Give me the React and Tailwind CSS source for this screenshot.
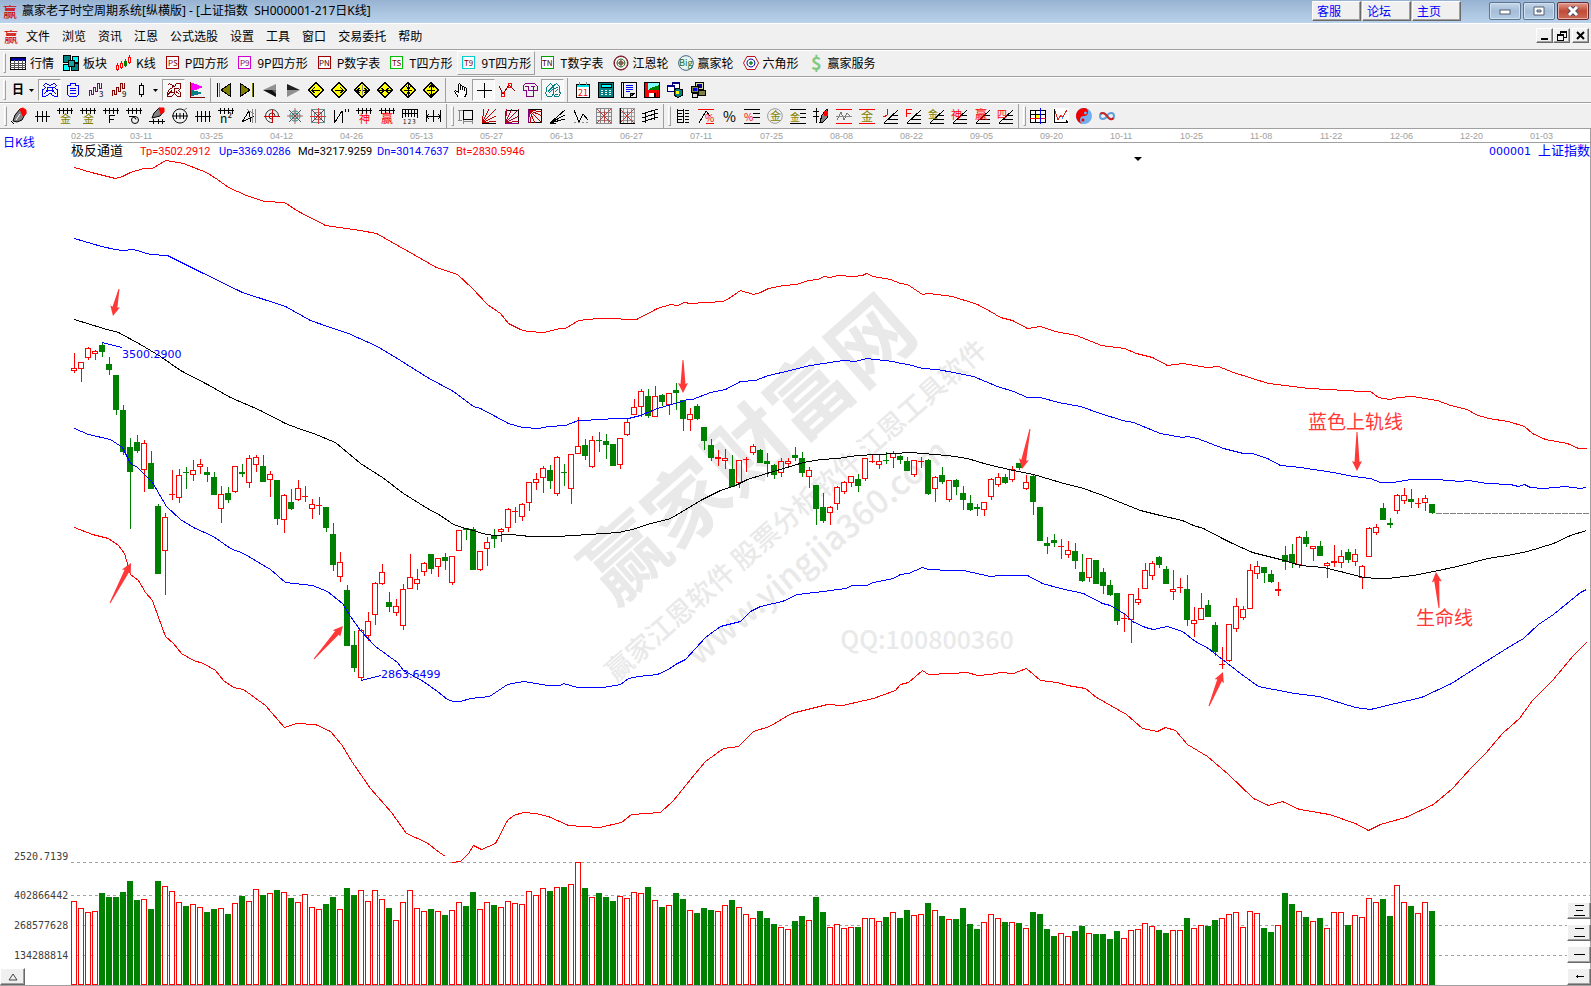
import React from 'react';

const UI_FONT = "font-['Noto_Sans_CJK_SC',sans-serif]";
const CJK = '"Noto Sans CJK SC", sans-serif';

// ---------------------------------------------------------------- icons
// every icon: p = [path, stroke, fill], t = [text, x, y, size, colour]
const fan = 'M1 15L15 1M1 15L8 1M1 15L15 8M1 15L3 1M1 15L15 13';
const comb = 'M0 2.5H16M2.5 0V6M6.5 0V6M10.5 0V6M14.5 0V6';
const slopes = 'M2 15.5H16M2 15L16 2M6 11.5H16M10 7.5H16';
const diamond = ['M8 .5L15.5 8L8 15.5L.5 8Z', '#000', '#ffff00'];

const ICONS = {
  quote: { p: [['M.5 2.5H15.5V14.5H.5Z', '#000', '#fff'], ['M1 3H15V5H1Z', '#000080', '#0000c0'], ['M0 8.5H16M0 10.5H16M0 12.5H16M4.5 5V14M8.5 5V14M12.5 5V14', '#555']] },
  blocks: { p: [['M.5 .5H7.5V7.5H.5Z', '#000', '#008080'], ['M9.5 1.5H15.5V7.5H9.5Z', '#000', '#00ffff'], ['M.5 9.5H6.5V15.5H.5Z', '#000', '#00ffff'], ['M8.5 8.5H15.5V15.5H8.5Z', '#000', '#008080'], ['M5.5 5.5H11.5V11.5H5.5Z', '#000', '#20a0a0']] },
  kline: { p: [['M1.5 8V16M5.5 6V14M13.5 0V9', '#f00'], ['M9.5 4V12', '#008000'], ['M.5 10.5H2.5V14.5H.5Z', '#f00', '#fff'], ['M4.5 8.5H6.5V12.5H4.5Z', '#f00', '#fff'], ['M8.5 6.5H10.5V10.5H8.5Z', '#008000', '#008000'], ['M12.5 2.5H14.5V7.5H12.5Z', '#f00', '#fff']] },
  ps: { p: [['M1.5 1.5H13.5V13.5H1.5Z', '#a00000', '#fff']], t: [['PS', 3, 11, 8, '#800000']] },
  p9: { p: [['M1.5 1.5H13.5V13.5H1.5Z', '#d000d0', '#fff']], t: [['P9', 3, 11, 8, '#800060']] },
  pn: { p: [['M1.5 1.5H13.5V13.5H1.5Z', '#a00000', '#fff']], t: [['PN', 2, 11, 8, '#400000']] },
  ts: { p: [['M1.5 1.5H13.5V13.5H1.5Z', '#00c000', '#fff']], t: [['TS', 3, 11, 8, '#800000']] },
  t9: { p: [['M1.5 1.5H13.5V13.5H1.5Z', '#00d0d0', '#fff']], t: [['T9', 3, 11, 8, '#800000']] },
  tn: { p: [['M1.5 1.5H13.5V13.5H1.5Z', '#00a000', '#fff']], t: [['TN', 2, 11, 8, '#400000']] },
  gann: { smooth: true, p: [['M8 1A7 7 0 1 1 7.9 1Z', '#801828', '#fff'], ['M8 1.5A6.500 6.500 0 1 1 7.9 1.5Z', '#801828'], ['M8 4A4 4 0 1 1 7.9 4Z', '#207020'], ['M8 6A2 2 0 1 1 7.9 6Z', '#b02030', '#d06060'], ['M8 4V12M4 8H12', '#507050']] },
  big: { smooth: true, p: [['M8 .7A7.3 7.3 0 1 1 7.9 .7Z', '#406080', '#e8f4f0']], t: [['Big', 1, 11, 9, '#107030']] },
  hex: { smooth: true, p: [['M4 1.5H12L15.5 8L12 14.5H4L.5 8Z', '#c01020', '#fff'], ['M8 4A4 4 0 1 1 7.9 4Z', '#0000a0'], ['M8 6.5A1.5 1.5 0 1 1 7.9 6.5Z', '#209040', '#209040']] },
  dollar: { t: [['$', 3, 15, 18, '#80c880']] },
  day: { t: [['日', 2, 12, 12, '#000']] },
  frame: { p: [['M1.5 3.5L3.5 1.5L8 3.5L12.5 1.5L14.5 3.5L12.5 5.5L15.5 8V14.5H12.5L8 11.5L3.5 14.5H.5V8L3.5 5.5ZM4.5 5.5H11.5M2 12L6 8.5H10L14 12M6 6.5L4 9M10 6.5L12 9M6.5 11.5H9.5', '#0000ff']] },
  clip: { p: [['M5.5 1.5H10.5V3.5H13.5V12.5L11.5 14.5H4.5L2.5 12.5V3.5H5.5ZM5 6.5H11M5 8.5H11M5 11.5H11', '#0000ff']] },
  wave3: { p: [['M1.5 14V8.5H3.5V12.5H5.5V5.5H7.5V9.5H9.5V1.5H11.5V6.5H13.5V1', '#800080']], t: [['3', 11, 15, 8, '#000']] },
  wave9: { p: [['M1.5 14V8.5H3.5V12.5H5.5V5.5H7.5V9.5H9.5V1.5H11.5V6.5H13.5V1', '#800000']], t: [['9', 11, 15, 8, '#000']] },
  candle: { p: [['M7.5 1V3M7.5 12V15M5.5 3.5H9.5V12.5H5.5Z', '#000']] },
  ornate: { p: [['M1.5 3.5L3.5 1.5L6.5 3.5V5.5L3.5 7.5L1.5 10.5V14.5H5.5L8.5 11.5L11.5 14.5H14.5V10.5L12.5 8.5L14.5 6.5V1.5H10.5L8.5 4.5L6.5 3.5M4.5 10.5H8.5V6.5H12.5M2 12.5L6 8.5M10 9.5L13.5 12.5', '#800000']] },
  flags: { p: [['M1.5 0V15.5H16', '#800000'], ['M2 1L13 5L2 9Z', '#ff00ff', '#ff00ff'], ['M2 8L12 11L2 14Z', '#008080', '#008080']] },
  first: { p: [['M1.5 1V15', '#000', '#808000'], ['M3 1V15', '#808000'], ['M14.5 1.5V14.5L5 8Z', '#000', '#808000']] },
  last: { p: [['M14.5 1V15', '#000'], ['M13 1V15', '#808000'], ['M1.5 1.5V14.5L11 8Z', '#000', '#808000']] },
  prev: { smooth: true, p: [['M14 2V8H1Z', 'none', '#909090'], ['M1 8H14V15Z', 'none', '#101010'], ['M14 8L10 8L14 12Z', 'none', '#606060']] },
  next: { smooth: true, p: [['M2 2V8H15Z', 'none', '#202020'], ['M15 8H2V15Z', 'none', '#909090']] },
  dLeft: { p: [diamond, ['M4 8.5H12M6.5 5.5L4 8.5L6.5 11', '#000']] },
  dRight: { p: [diamond, ['M4 8.5H12M9.5 5.5L12 8.5L9.5 11', '#000']] },
  dOut: { p: [diamond, ['M3 8.5H7M9 8.5H13M5.5 6L3 8.5L5.5 11M10.5 6L13 8.5L10.5 11', '#000'], ['M8 3V13', '#888']] },
  dIn: { p: [diamond, ['M2 8.5H14M4.5 6L7 8.5L4.5 11M11.5 6L9 8.5L11.5 11', '#000']] },
  dVin: { p: [diamond, ['M4 8.5H12M8.5 2V14M6 4L8.5 7L11 4M6 13L8.5 10L11 13', '#000']] },
  dVout: { p: [diamond, ['M4 8.5H12M8.5 2V14M6 5.5L8.5 3L11 5.5M6 11L8.5 14L11 11', '#000']] },
  hand: { p: [['M5.5 15.5L1.5 9.5L2.5 8.5L5.5 10.5V2.5L6.5 1.5L7.5 2.5V8V4.5L8.5 3.5L9.5 4.5V8V5.5L10.5 4.5L11.5 5.5V9V6.5L12.5 5.5L13.5 7V11.5L11.5 15.5', '#000', '#fff']] },
  cross: { p: [['M8.5 1V16M1 8.5H16', '#000']] },
  zigzag: { p: [['M0 4L4 12L10 3L16 9', '#800000'], ['M2.5 10.5H5.5V14.5H2.5ZM9.5 1.5H12.5V5.5H9.5Z', '#f00']] },
  tree: { p: [['M4.5 8.5H1.5V3.5L3.5 1.5H12.5L15.5 4.5V8.5H11.5M6.5 4V8H11V4M3 4.5H6M9 4.5H13M4.5 8.5V14.5H11.5V8.5', '#800080']] },
  cloud: { p: [['M5.5 1.5L8.5 4L11.5 1.5L14.5 4.5V9.5L15.5 11.5L13.5 14.5H9.5L8.5 12L6.5 14.5H2.5L.5 11.5L1.5 9V5.5ZM3 9.5L8 4.5M4 11L8 7M9 7L13 5M10 9.5L13 7.5M8.5 4V12M10 12.5H13', '#008080']] },
  calendar: { p: [['M1.5 2.5H14.5V15.5H1.5Z', '#000', '#fff'], ['M2 3.5H14M2 4.5H14', '#00e0e0'], ['M4.5 0V3M11.5 0V3', '#888']], t: [['21', 3, 14, 9, '#f00']] },
  calc: { p: [['M.5 .5H15.5V15.5H.5Z', '#000', '#008080'], ['M3 2.5H13V5.5H3Z', '#000', '#00ffff'], ['M3 8.5H5M7 8.5H9M11 8.5H13M3 10.5H5M7 10.5H9M11 10.5H13M3 12.5H5M7 12.5H9M11 12.5H13', '#fff']] },
  note: { p: [['M.5 .5H15.5V15.5H.5Z', '#000', '#f0f0f0'], ['M2.5 1V15', '#000'], ['M5 3.5H12M5 5.5H12M5 7.5H12M5 9.5H9', '#0000ff'], ['M9 15V11H14Z', '#000', '#808080']] },
  disk: { p: [['M.5 .5H15.5V15.5H.5Z', '#000', '#f00'], ['M4 1H15V8H4Z', 'none', '#80ffff'], ['M4 8L9 5L15 3V8Z', 'none', '#008000'], ['M5 11H12V15H5Z', 'none', '#fff'], ['M10 11H12V15H10Z', 'none', '#000'], ['M13.5 9V15', '#0000a0']] },
  netpc: { p: [['M5.5 .5H12.5V6.5H5.5Z', '#000080', '#fff'], ['M.5 3.5H7.5V9.5H.5Z', '#000080', '#fff'], ['M5 1.5H13M0 4.5H8', '#000080'], ['M11 6L15.5 8V13L11 15.5L7 13V8Z', '#000', '#008080'], ['M9 9H12V12H9Z', 'none', '#ffff00']] },
  pcs: { p: [['M5.5 .5H13.5V7.5H5.5Z', '#000', '#d8d8a0'], ['M7 2H12V6H7Z', 'none', '#0000a0'], ['M1.5 4.5H8.5V10.5H1.5Z', '#000', '#808040'], ['M3 6H7V9H3Z', 'none', '#0000ff'], ['M8.5 8.5H15.5V13.5H8.5Z', '#000', '#808040'], ['M2.500 11.5H7.5V15.5H2.500Z', '#000', '#ddd']] },
  pen: { smooth: true, p: [['M2 13L4 7L9 1L15 4L11 12L6 14Z', '#000', '#808080'], ['M9 1L12 0L15 2V6L12 8Z', '#f00', '#f00'], ['M5 12L9 6', '#fff'], ['M0 13L3 16', '#000']] },
  ticks: { p: [['M1 8.5H16M3.5 3V14M8.5 3V14M12.5 3V14', '#000']] },
  gold1: { p: [[comb, '#000']], t: [['金', 3, 15, 11, '#808000']] },
  gold2: { p: [[comb, '#000'], ['M3 15.5H13', '#808000']], t: [['金', 3, 15, 11, '#808000']] },
  fib: { p: [[comb, '#000'], ['M6.5 15V7.5H12M6.5 11.5H11', '#000']] },
  spiral: { smooth: true, p: [['M0 2.5H16M2.5 0V6M6.5 0V6M10.5 0V6M14.5 0V6', '#000'], ['M3 8.5H9A3.500 3.500 0 1 1 5.500 12A2 2 0 0 1 10 11.500', '#000']] },
  penline: { smooth: true, p: [['M3 10L5 5L10 0L15 3L11 8Z', '#000', '#808080'], ['M10 0H15V4L12 6Z', '#f00', '#f00'], ['M0 13.5H16M4.5 11V16M9.5 11V16M13.5 11V16', '#000']] },
  ringScale: { smooth: true, p: [['M8 1A7 7 0 1 1 7.9 1Z', '#000'], ['M0 8H16M4.5 5V11M8 5V11M11.5 5V11', '#000'], ['M11 3L15 0', '#777']] },
  ticks4: { p: [['M0 8.5H16M2.5 3V14M6.5 3V14M10.5 3V14M14.5 3V14', '#000']] },
  nsq: { p: [[comb, '#000']], t: [['n²', 2, 15, 12, '#000']] },
  angle: { p: [['M1 14L8 3L10 14M1 14L13 8', '#000'], ['M6 1.5L13 6M11.5 1V15M14.5 1V15', '#888']] },
  swirl: { smooth: true, p: [['M9 14.500A6.500 6.500 0 1 1 14.500 8', '#333'], ['M11 8A3 3 0 1 0 8 11', '#333'], ['M0 8.5H16M8.5 2V15', '#d00000']] },
  star: { smooth: true, p: [['M8 3A5 5 0 1 1 7.9 3Z M8 5A3 3 0 1 1 7.9 5Z', '#008080'], ['M8 0V16M0 8H16', '#c06060'], ['M2 2L14 14M14 2L2 14', '#555']] },
  starBox: { p: [['M1.5 1.5H14.5V14.5H1.5ZM4.5 4.5H11.5V11.5H4.5Z', '#609090'], ['M8.5 0V16M0 8.5H16', '#e03030'], ['M2 2L14 14M14 2L2 14', '#883333']] },
  nmark: { p: [['M1.5 2V15M2 14L9 3M9.5 3V15M12.5 1V4M15.5 1V4', '#000']] },
  shen: { p: [[comb, '#000']], t: [['神', 3, 15, 11, '#f00']] },
  ying: { p: [[comb, '#000']], t: [['赢', 2, 15, 12, '#f00']] },
  ruler: { p: [['M.5 9.5V1.5H15.5V9.5M0 5.5H16M3.5 2V9M6.5 2V9M9.5 2V9M12.5 2V9', '#000']], t: [['1 2 3', 1, 16, 6, '#000']] },
  spread: { p: [['M1.5 2V14M8.5 2V14M15.5 2V14M2 8.5H15M4 6L2 8.5L4 11M13 6L15 8.5L13 11', '#000']] },
  crop: { p: [['M5.5 2.5H14.5V11.5H5.5Z', '#000'], ['M0 2.5H5M1.5 3V12M0 12.5H4M5.5 13.5H15M5.5 12V16M14.5 12V16', '#888']] },
  fanRed: { p: [[fan, '#c00000'], ['M1 15.5H15', '#000']] },
  fanBox: { p: [['M1.5 2.5H14.5V15', '#000'], [fan, '#b00020'], ['M1 15.5H15M1.5 3V15', '#800080']] },
  fanBoxDown: { p: [['M1.5 1.5H14.5V14.5H1.5Z', '#000'], ['M2 2L15 15M2 2L8 15M2 2L15 8M2 2L15 4M2 2L4 15', '#c00000'], ['M1.5 1V15', '#800080']] },
  fanBlack: { p: [['M0 15L15 2M0 15L15 7M0 15L15 11M0 15H6', '#000']] },
  vee: { p: [['M1 2L6 14L10 6L15 12', '#000'], ['M1 14.5H3M5 14.5H7M9 14.5H11M13 14.5H15', '#888']] },
  gridGrey: { p: [['M.5 .5H15.5V15.5H.5ZM0 4.5H16M0 8.5H16M0 12.5H16M4.5 0V16M8.5 0V16M12.5 0V16', '#888'], ['M1 1L15 15M15 1L1 15M8.5 3V14', '#c04040']] },
  gridAxis: { p: [['M.5 .5H15.5V15.5H.5ZM0 4.5H16M0 8.5H16M0 12.5H16M4.5 0V16M8.5 0V16M12.5 0V16', '#999'], ['M1 1L15 15M15 1L1 15M8.5 3V14', '#c04040'], ['M1.5 0V15.5H16', '#000']] },
  parallels: { p: [['M0 6L16 1M0 10L16 5M0 14L16 9M3.5 5V15M12.5 2V12', '#000']] },
  ladder: { p: [['M2.5 1V15M8.5 1V15M2 2.5H9M2 5.5H7M2 8.5H9M2 11.5H7M2 14.5H9M10 2.5H14M10 5.5H14M10 8.5H14M10 11.5H14M10 14.5H14', '#000']] },
  pctSlope: { p: [['M0 1.5H16M8 15.5H16', '#f00'], ['M1 15L8 3L12 8', '#000']], t: [['%', 7, 14, 10, '#f00']] },
  pct: { t: [['%', 2, 14, 14, '#000']] },
  pctLines: { p: [['M0 1.5H16M9 5.5H16M9 9.5H16M0 15.5H16', '#000']], t: [['%', 0, 13, 10, '#f00']] },
  goldRing: { smooth: true, p: [['M8 .7A7.3 7.3 0 1 1 7.9 .7Z', '#999']], t: [['金', 3, 12, 11, '#808000']] },
  goldLines: { p: [['M0 1.5H16M10 5.5H16M10 9.5H16M0 15.5H16', '#000']], t: [['金', 0, 13, 10, '#808000']] },
  penBars: { p: [['M0 3.5H6M0 8.5H6M3.5 0V15', '#000'], ['M7 14L9 7L14 1L15 9L10 14Z', '#000', '#808080'], ['M11 3H15V8H11Z', 'none', '#f00']] },
  mid: { p: [['M0 1.5H16M0 15.5H16', '#f00'], ['M1 12L5 4L8 12L11 5L15 9', '#777'], ['M0 8.5H16', '#888']] },
  goldMid: { p: [['M0 1.5H16M0 15.5H16', '#f00']], t: [['金', 2, 13, 12, '#808000']] },
  jSlope: { p: [[slopes, '#000'], ['M5.5 1V6.5L3 8.5H1', '#f00']] },
  fSlope: { p: [[slopes, '#000'], ['M1.5 9V1.5H7M1.5 5.5H6', '#f00']] },
  goldSlope: { p: [[slopes, '#000']], t: [['金', 0, 10, 10, '#808000']] },
  shenSlope: { p: [[slopes, '#000']], t: [['神', 0, 11, 11, '#f00']] },
  yingSlope: { p: [[slopes, '#000']], t: [['赢', 1, 11, 12, '#f00']] },
  siSlope: { p: [[slopes, '#000']], t: [['四', 0, 10, 10, '#f00']] },
  table: { p: [['M.5 2.5H15.5V14.5H.5ZM5.5 2V15', '#000', '#fff'], ['M6 7H10V11H6Z', 'none', '#ffff00'], ['M0 6.5H16', '#000'], ['M0 10.5H16', '#f00'], ['M10.5 0V16', '#0000ff']] },
  axis: { p: [['M0 0H16V16H0Z', 'none', '#fff'], ['M1.5 1V14.5H15M13 12.5L15 14.5', '#000'], ['M2 3L5 12L8 7M9 10L14 2', '#e02020'], ['M8 7L10 11', '#4080ff']] },
  taiji: { smooth: true, p: [['M8 0A8 8 0 1 1 7.9 0Z', 'none', '#70b0f0'], ['M8 0A8 8 0 0 0 8 16A4 4 0 0 1 8 8A4 4 0 0 0 8 0Z', 'none', '#f00000'], ['M9.500 3.500A1.500 1.500 0 1 1 9.400 3.500Z', 'none', '#70b0f0'], ['M7 10.500A1.500 1.500 0 1 1 6.900 10.500Z', 'none', '#f00000']] },
  infinity: { smooth: true, wide: 2, p: [['M8 8C6 4 1 4 1 8S6 12 8 8', '#60a0d8'], ['M8 8C10 4 15 4 15 8S10 12 8 8', '#60a0d8'], ['M1.500 6C4 3.500 6.500 6 8 8S12 13 14.500 10', '#d02020']] },
};

function Icon({ name }) {
  const { p = [], t = [], smooth, wide } = ICONS[name];
  return (
    <svg viewBox="0 0 16 16" className="h-4 w-4 shrink-0 overflow-visible" aria-hidden="true">
      {p.map(([d, stroke, fill], i) => (
        <path key={i} d={d} stroke={stroke} fill={fill || 'none'} strokeWidth={wide || 1} shapeRendering={smooth ? 'auto' : 'crispEdges'} />
      ))}
      {t.map(([s, x, y, size, color], i) => (
        <text key={i} x={x} y={y} fontSize={size} fill={color} fontFamily={CJK} fontWeight={name === 'day' || name === 'dollar' ? 700 : 400}>{s}</text>
      ))}
    </svg>
  );
}

// ---------------------------------------------------------------- window chrome
const RAISED = 'border border-t-white border-l-white border-r-[#696969] border-b-[#696969] bg-[#f0f0f0] shadow-[inset_-1px_-1px_0_#a0a0a0]';

function Logo() {
  return <span className="flex w-[14px] justify-center text-[14px] leading-4 text-[#d00000]">赢</span>;
}

function TitleBar() {
  return (
    <header className="flex h-[23px] items-center bg-gradient-to-b from-[#98b3d2] to-[#bad2eb] pr-[2px] pb-px pl-[3px]">
      <Logo />
      <h1 className="ml-[5px] flex-1 font-['Noto_Sans','Noto_Sans_CJK_SC',sans-serif] text-xs leading-4 whitespace-pre text-black">赢家老子时空周期系统[纵横版] - [上证指数  SH000001-217日K线]</h1>
      <nav className="mr-7 flex gap-px">
        {['客服', '论坛', '主页'].map((s) => (
          <a key={s} href="#" className={`flex h-5 w-[49px] items-center pl-1 text-xs text-[#0000ff] ${RAISED}`}>{s}</a>
        ))}
      </nav>
      <div className="flex gap-[2px]">
        <button aria-label="最小化" className="flex h-[18px] w-8 items-center justify-center rounded-xs border border-[#5d7590] bg-gradient-to-b from-[#c5d6e9] via-[#a5bdd8] to-[#b4cbe4] shadow-[inset_0_0_0_1px_#d0e0f0]">
          <svg viewBox="0 0 12 8" className="h-2 w-3"><rect x="1" y="3" width="10" height="4" fill="#fff" stroke="#555f70" /></svg>
        </button>
        <button aria-label="还原" className="flex h-[18px] w-8 items-center justify-center rounded-xs border border-[#5d7590] bg-gradient-to-b from-[#c5d6e9] via-[#a5bdd8] to-[#b4cbe4] shadow-[inset_0_0_0_1px_#d0e0f0]">
          <svg viewBox="0 0 12 10" className="h-[10px] w-3"><path d="M1 1H11V9H1Z" fill="#fff" stroke="#555f70" /><path d="M4 4H8V6H4Z" fill="#a5bdd8" stroke="#555f70" /></svg>
        </button>
        <button aria-label="关闭" className="flex h-[18px] w-8 items-center justify-center rounded-xs border border-[#6b2a28] bg-gradient-to-b from-[#e09a90] via-[#c04a35] to-[#cc6a58] shadow-[inset_0_0_0_1px_#e8b0a8]">
          <svg viewBox="0 0 12 10" className="h-[10px] w-3"><path d="M2 1L10 9M10 1L2 9" stroke="#4a4f60" strokeWidth="5" /><path d="M2 1L10 9M10 1L2 9" stroke="#fff" strokeWidth="3" /></svg>
        </button>
      </div>
    </header>
  );
}

function MenuBar() {
  const small = `flex h-[15px] w-[17px] items-center justify-center ${RAISED}`;
  return (
    <div className="flex h-[27px] items-center border-t border-b border-t-white border-b-[#a0a0a0] pr-[2px] pb-[2px] pl-1">
      <Logo />
      <nav className="ml-[2px] flex flex-1">
        {['文件', '浏览', '资讯', '江恩', '公式选股', '设置', '工具', '窗口', '交易委托', '帮助'].map((s) => (
          <button key={s} className="px-[6px] text-xs leading-4 text-black">{s}</button>
        ))}
      </nav>
      <div className="flex">
        <button aria-label="最小化子窗口" className={small}><svg viewBox="0 0 10 10" className="h-[10px] w-[10px]"><path d="M1 8H8" stroke="#000" strokeWidth="2" /></svg></button>
        <button aria-label="还原子窗口" className={small}><svg viewBox="0 0 10 10" className="h-[10px] w-[10px]" shapeRendering="crispEdges"><path d="M3.500 3V1.500H9.500V6.500H7M3 .5H10M.5 4.500H6.500V9.500H.5ZM0 3.500H7" fill="none" stroke="#000" /></svg></button>
        <button aria-label="关闭子窗口" className={`ml-[2px] ${small}`}><svg viewBox="0 0 10 10" className="h-[10px] w-[10px]"><path d="M1 1L8 8M8 1L1 8" stroke="#000" strokeWidth="2" /></svg></button>
      </div>
    </div>
  );
}

const Grip = () => <span className="h-5 w-[3px] border border-t-white border-r-[#a0a0a0] border-b-[#a0a0a0] border-l-white" />;
const Divider = () => <span className="w-px self-stretch bg-[#a0a0a0]" />;

const VIEWS = [
  ['quote', '行情'], ['blocks', '板块'], ['kline', 'K线'], ['ps', 'P四方形'], ['p9', '9P四方形'], ['pn', 'P数字表'],
  ['ts', 'T四方形'], ['t9', '9T四方形'], ['tn', 'T数字表'], ['gann', '江恩轮'], ['big', '赢家轮'], ['hex', '六角形'], ['dollar', '赢家服务'],
];

function ViewBar() {
  return (
    <div className="flex h-[27px] items-center border-t border-b border-t-white border-b-[#a0a0a0] pb-px pl-[3px]">
      <Grip />
      {VIEWS.map(([icon, label]) => (
        <button key={icon} className={`mr-px flex h-6 items-center gap-1 border px-[3px] pb-px text-xs text-black ${icon === 't9' ? 'border-t-white border-r-[#a0a0a0] border-b-[#a0a0a0] border-l-white' : 'border-transparent'}`}>
          <Icon name={icon} />
          <span>{label}</span>
        </button>
      ))}
    </div>
  );
}

const PRESSED = ['frame', 'ornate', 'cross', 'cloud'];

function Tool({ name }) {
  const look = PRESSED.includes(name)
    ? 'border-t-[#a0a0a0] border-l-[#a0a0a0] border-r-white border-b-white bg-[#f8f8f8]'
    : 'border-transparent';
  return (
    <button aria-label={name} className={`flex h-[22px] w-[23px] items-center justify-center border ${look}`}>
      <Icon name={name} />
    </button>
  );
}

function Drop({ label }) {
  return (
    <button aria-label={label} className="flex h-[22px] w-[9px] items-center">
      <svg viewBox="0 0 5 3" className="h-[3px] w-[5px]"><path d="M0 0H5L2.500 3Z" fill="#000" /></svg>
    </button>
  );
}

function PeriodBar() {
  return (
    <div className="flex h-[26px] items-center border-t border-b border-t-white border-b-[#a0a0a0] pl-[3px]">
      <Grip />
      <Tool name="day" />
      <Drop label="周期" />
      {['frame', 'clip', 'wave3', 'wave9', 'candle'].map((n) => <Tool key={n} name={n} />)}
      <Drop label="线型" />
      {['ornate', 'flags'].map((n) => <Tool key={n} name={n} />)}
      <span className="flex w-1 justify-center self-stretch"><Divider /></span>
      {['first', 'last', 'prev', 'next', 'dLeft', 'dRight', 'dOut', 'dIn', 'dVin', 'dVout'].map((n) => <Tool key={n} name={n} />)}
      <span className="flex w-[7px] justify-center self-stretch"><Divider /></span>
      {['hand', 'cross', 'zigzag', 'tree', 'cloud'].map((n) => <Tool key={n} name={n} />)}
      <span className="flex w-[7px] justify-center self-stretch"><Divider /></span>
      {['calendar', 'calc', 'note', 'disk', 'netpc', 'pcs'].map((n) => <Tool key={n} name={n} />)}
    </div>
  );
}

const DRAW_GROUPS = [
  ['pen', 'ticks', 'gold1', 'gold2', 'fib', 'spiral', 'penline', 'ringScale', 'ticks4', 'nsq', 'angle', 'swirl', 'star', 'starBox', 'nmark', 'shen', 'ying', 'ruler', 'spread'],
  ['crop', 'fanRed', 'fanBox', 'fanBoxDown', 'fanBlack', 'vee', 'gridGrey', 'gridAxis', 'parallels'],
  ['ladder', 'pctSlope', 'pct', 'pctLines', 'goldRing', 'goldLines', 'penBars', 'mid', 'goldMid', 'jSlope', 'fSlope', 'goldSlope', 'shenSlope', 'yingSlope', 'siSlope'],
  ['table', 'axis', 'taiji', 'infinity'],
];

function DrawBar() {
  return (
    <div className="flex h-[26px] items-center border-t border-b border-t-white border-b-[#a0a0a0] pl-1">
      {DRAW_GROUPS.map((group, i) => (
        <React.Fragment key={i}>
          {i > 0 && <span className="mr-1 ml-[2px] flex self-stretch"><Divider /></span>}
          <Grip />
          {group.map((n) => <Tool key={n} name={n} />)}
        </React.Fragment>
      ))}
    </div>
  );
}

// ---------------------------------------------------------------- chart data
// direction, body top, body bottom, high, low
const CANDLES = `
R 368 371 353 373|R 362 369 362 382|R 348 358 347 360|R 351 354 350 360|G 345 352 342 357|G 364 370 357 375|G 375 410 375 415|G 410 452 405 455
G 447 472 438 529|G 442 451 435 453|R 443 470 440 492|G 463 489 451 489|G 506 574 504 574|R 517 551 513 595|R 494 494 470 500|R 475 498 469 503
G 472 472 467 489|R 470 475 460 481|R 464 467 459 474|G 472 475 467 482|G 477 495 472 495|R 494 509 486 523|G 493 500 487 503|R 466 492 466 493
G 472 474 464 477|R 458 483 455 488|R 457 465 455 472|G 466 482 455 482|R 474 480 471 497|G 480 519 480 525|R 495 520 494 533|G 502 509 489 510
R 488 500 480 501|R 496 496 486 502|R 504 509 499 519|R 505 505 497 515|G 507 528 507 532|G 534 565 523 571|R 562 577 552 582|G 590 646 585 646
G 645 668 631 672|R 630 678 629 681|R 621 636 612 641|R 583 615 582 625|R 572 584 564 585|G 602 607 592 612|R 606 613 599 616|R 589 626 584 630
R 577 589 554 589|R 579 584 569 590|R 563 572 562 576|G 554 569 554 574|R 558 567 558 577|G 557 561 553 570|R 556 583 556 585|R 530 551 530 551
G 528 530 528 540|G 529 570 527 570|R 551 570 551 571|R 542 549 537 566|G 535 539 529 548|R 529 532 528 542|R 509 528 508 532|R 511 511 507 523
R 504 517 503 521|R 482 503 482 511|R 479 483 473 490|R 468 478 466 493|G 470 481 465 489|R 457 494 456 496|G 472 472 464 486|R 454 489 454 504
R 446 454 417 454|G 445 456 439 460|R 440 467 436 468|G 440 440 432 452|G 441 445 434 459|G 444 466 444 466|R 438 465 438 469|R 422 435 419 436
R 407 415 399 415|R 391 407 389 417|G 396 416 389 418|R 396 417 386 417|G 395 402 394 406|R 393 405 393 415|G 390 393 383 410|G 400 419 400 431
R 414 420 408 431|G 406 419 404 420|G 427 441 427 450|G 445 458 439 461|R 457 459 450 466|R 458 461 449 469|G 469 487 455 487|R 460 483 460 488
R 459 459 457 472|R 446 453 444 455|G 450 463 449 463|G 461 464 453 477|G 465 475 464 479|R 461 473 458 477|R 461 464 458 466|G 455 458 447 461
G 458 473 452 477|R 470 477 467 488|G 485 509 485 525|G 507 521 493 523|R 507 513 506 525|R 487 504 486 510|R 482 492 481 494|R 476 483 476 487
G 479 486 474 492|R 458 479 458 481|R 461 461 454 463|R 461 465 455 469|G 460 460 452 464|R 453 458 451 468|G 456 460 455 464|G 461 471 457 471
R 460 475 460 477|R 461 461 457 468|G 460 494 459 495|R 477 489 476 502|G 475 482 467 484|R 480 500 480 502|G 480 487 479 495|G 493 500 486 510
G 503 510 495 511|G 507 509 504 516|R 502 510 502 516|R 479 497 478 500|R 477 485 473 487|G 477 483 474 484|R 469 480 466 482|G 463 468 463 470
R 482 489 475 490|G 476 502 475 515|G 507 541 507 541|G 543 546 537 554|G 540 543 534 547|R 546 546 539 559|R 550 555 541 558|G 551 561 543 569
G 572 581 554 582|R 558 578 558 582|G 560 584 560 584|G 572 586 568 594|G 585 595 580 596|G 593 621 593 625|R 618 618 614 632|R 594 620 594 643
R 599 603 588 605|R 570 589 563 589|R 563 576 561 580|G 557 565 556 568|G 569 584 566 584|R 589 592 570 600|R 587 587 578 593|G 589 620 575 626
R 620 624 607 637|R 608 620 593 620|G 605 617 600 617|G 625 652 622 656|R 664 664 647 669|R 624 661 624 662|R 606 629 598 632|R 609 618 606 620
R 570 609 564 609|R 566 574 561 579|G 567 573 567 583|G 574 582 570 583|R 589 591 582 596|G 555 562 546 570|G 554 563 544 568|R 537 565 536 568
G 537 544 531 547|R 546 549 546 561|G 546 556 541 556|R 563 566 562 578|R 561 563 545 567|R 556 563 550 568|G 552 560 549 563|R 554 562 549 566
R 566 578 565 589|R 528 557 527 557|R 527 533 524 535|G 508 520 503 520|G 523 525 518 528|R 495 511 494 514|R 495 501 488 504|G 499 502 489 508
R 503 503 498 508|R 498 503 495 511|G 504 513 504 514`
  .trim()
  .split(/[|\n]/)
  .map((row) => {
    const [dir, ...n] = row.split(' ');
    return [dir, ...n.map(Number)];
  });

// bar tops, three units to the pixel, counted down from y = 840
const VOLUMES = [
  184, 205, 217, 214, 159, 171, 171, 156, 123, 180, 178, 207, 123, 139, 154, 187, 198, 193, 202, 216, 207, 205, 222, 190, 168, 184, 148, 165, 160, 150,
  157, 174, 187, 163, 202, 208, 192, 171, 208, 144, 165, 151, 184, 151, 178, 204, 241, 187, 151, 205, 214, 207, 214, 225, 211, 187, 198, 156, 208, 187,
  195, 202, 184, 190, 193, 154, 166, 145, 153, 142, 141, 133, 67, 144, 172, 159, 171, 183, 169, 175, 157, 160, 141, 181, 201, 196, 159, 177, 211, 219,
  204, 210, 214, 196, 180, 202, 223, 235, 213, 234, 252, 262, 268, 243, 228, 241, 171, 216, 262, 253, 265, 262, 261, 235, 235, 244, 231, 217, 234, 210,
  226, 223, 189, 211, 228, 238, 237, 204, 252, 267, 247, 223, 235, 246, 247, 249, 265, 216, 222, 267, 288, 280, 289, 273, 258, 280, 282, 282, 297, 273,
  295, 271, 268, 250, 259, 270, 279, 271, 271, 234, 265, 256, 258, 240, 235, 223, 217, 262, 214, 220, 264, 276, 256, 159, 192, 214, 231, 244, 234, 265,
  217, 217, 255, 226, 232, 175, 187, 177, 228, 136, 187, 198, 220, 187, 213,
];

const LINES = [
  ['#ff0000', '74,167 91,172 103,175 115,178 122,176 130,172 143,168 152,168 165,160 183,163 206,172 217,179 228,187 246,195 264,201 284,202 298,211 325,225 360,230 376,233 406,250 436,267 457,274 472,288 487,304 500,313 508,323 520,329 527,331 543,332 560,328 565,328 578,320 597,318 618,318 623,319 636,319 657,308 670,304 677,305 684,302 690,303 706,302 723,301 730,297 740,290 753,294 760,292 768,288 783,285 796,284 808,280 818,279 823,276 829,277 838,275 853,276 862,275 866,273 873,276 890,279 900,283 907,284 922,294 928,293 952,296 977,304 990,311 1000,317 1012,320 1027,328 1040,326 1055,331 1076,335 1101,345 1124,348 1136,353 1152,357 1167,365 1182,363 1207,367 1218,366 1233,372 1268,383 1309,388 1345,390 1362,391 1370,391 1378,397 1389,399 1398,397 1412,396 1437,400 1450,405 1467,409 1475,414 1488,418 1508,421 1524,426 1532,433 1545,439 1567,443 1578,448 1586,448'],
  ['#0000ff', '74,238 101,246 115,249 122,250 133,249 150,254 167,255 183,263 197,270 242,292 285,306 310,320 327,326 348,333 377,346 400,360 427,377 440,384 453,391 473,406 480,408 508,423 522,427 538,428 548,426 565,425 578,420 603,419 612,418 628,418 640,415 657,408 678,402 687,399 692,399 710,392 725,389 740,381 755,380 768,375 790,370 805,366 823,363 843,360 855,361 866,358 893,361 900,363 908,364 922,368 937,369 953,372 973,376 997,386 1013,391 1027,397 1040,397 1058,402 1080,406 1100,413 1122,420 1133,422 1160,433 1182,437 1187,436 1197,438 1223,448 1243,453 1252,453 1267,458 1280,465 1300,467 1333,472 1353,476 1370,478 1380,482 1393,482 1410,479 1437,479 1460,481 1468,480 1487,483 1510,484 1518,486 1524,484 1530,487 1543,488 1565,486 1580,488 1586,487'],
  ['#000000', '74,319 103,328 118,332 140,344 160,356 180,370 207,384 230,397 260,410 285,423 298,428 313,433 335,442 360,463 382,477 403,493 427,508 440,515 453,524 465,528 473,530 482,533 493,535 510,534 530,536 557,536 573,535 603,533 618,532 632,529 647,524 670,518 687,508 702,499 720,490 735,485 747,479 763,474 783,468 803,462 820,459 837,458 857,455 877,454 910,452 947,455 967,458 987,464 1013,470 1033,474 1060,482 1083,488 1100,494 1140,510 1160,515 1182,520 1193,525 1203,528 1222,538 1232,543 1252,552 1280,559 1300,565 1323,567 1340,571 1363,577 1377,578 1387,578 1413,575 1433,571 1457,566 1487,558 1507,555 1527,551 1553,543 1570,535 1586,530'],
  ['#0000ff', '74,428 88,434 110,439 122,447 130,463 137,467 152,482 166,506 180,519 193,527 213,536 230,548 243,553 270,569 285,582 312,585 327,591 342,603 350,616 360,630 375,646 397,662 403,670 423,681 437,691 447,699 453,701 460,701 470,698 489,696 507,684 523,681 548,685 560,685 563,683 577,687 603,687 620,684 628,678 638,676 657,674 668,669 675,664 685,659 705,637 720,626 740,621 750,611 760,606 782,601 797,594 823,591 845,588 852,585 866,585 873,582 893,578 900,574 908,573 922,567 928,569 950,570 963,570 990,576 1000,575 1027,575 1042,583 1060,588 1083,593 1102,603 1110,605 1125,614 1132,621 1145,627 1153,629 1167,626 1182,631 1195,641 1208,648 1222,659 1240,673 1258,686 1294,693 1319,696 1355,707 1370,709 1395,703 1421,697 1451,683 1476,667 1503,650 1523,638 1538,624 1553,614 1580,592 1586,589'],
  ['#ff0000', '74,527 92,534 108,538 118,545 124,553 130,574 138,580 145,592 152,600 158,617 165,636 173,643 181,653 193,660 203,663 215,670 223,680 233,687 243,689 265,705 284,727 296,723 315,724 330,731 341,744 352,762 370,788 391,812 406,833 426,842 439,852 445,856'],
  ['#ff0000', '452,862 460,861 468,853 473,845 481,849 495,843 507,820 513,815 523,812 535,813 548,816 568,825 599,827 621,822 631,814 660,812 673,800 690,779 705,761 723,748 738,746 753,731 769,726 791,713 827,704 842,705 873,698 895,690 900,684 908,682 922,670 928,674 950,673 967,672 977,675 990,674 1000,672 1013,673 1026,668 1040,680 1057,682 1067,685 1085,688 1096,697 1126,714 1142,728 1157,731 1165,727 1175,730 1187,744 1207,756 1228,774 1253,798 1268,805 1282,801 1299,809 1329,814 1355,823 1368,830 1380,824 1405,817 1433,804 1452,788 1471,767 1485,753 1502,733 1519,718 1532,700 1552,680 1573,655 1586,642'],
];

// tail x, tail y, tip x, tip y
const ARROWS = [
  [119, 289, 113, 316], [110, 603, 131, 563], [314, 659, 343, 626], [683, 360, 683, 393],
  [1030, 429, 1022, 469], [1209, 706, 1223, 672], [1357, 432, 1357, 471], [1439, 608, 1436, 572],
];

const DATES = ['02-25', '03-11', '03-25', '04-12', '04-26', '05-13', '05-27', '06-13', '06-27', '07-11', '07-25', '08-08', '08-22', '09-05', '09-20', '10-11', '10-25', '11-08', '11-22', '12-06', '12-20', '01-03'];

const LEGEND = [
  ['Tp=3502.2912', 140, '#ff0000'], ['Up=3369.0286', 219, '#0000ff'], ['Md=3217.9259', 298, '#000000'],
  ['Dn=3014.7637', 377, '#0000ff'], ['Bt=2830.5946', 456, '#ff0000'],
];

const SCALE = [['2520.7139', 862, 860], ['402866442', 895, 899], ['268577628', 925, 929], ['134288814', 955, 959]];

// ---------------------------------------------------------------- chart
function Candle({ row, i }) {
  const [dir, top, bottom, high, low] = row;
  const x = 71 + i * 7;
  const color = dir === 'R' ? '#ff0000' : '#008000';
  const h = Math.max(bottom - top, 1);
  const solid = dir === 'G' || h < 3;
  return (
    <g>
      {top > high && <rect x={x + 3} y={high} width="1" height={top - high} fill={color} />}
      {low > top + h && <rect x={x + 3} y={top + h} width="1" height={low - top - h} fill={color} />}
      {solid
        ? <rect x={x} y={top} width="6" height={h} fill={color} />
        : <rect x={x + 0.5} y={top + 0.5} width="5" height={h - 1} fill="none" stroke={color} />}
    </g>
  );
}

function Volume({ top, dir, i }) {
  const x = 71 + i * 7;
  const y = 840 + Math.round(top / 3);
  return dir === 'G'
    ? <rect x={x} y={y} width="6" height={985 - y} fill="#008000" />
    : <rect x={x + 0.5} y={y + 0.5} width="5" height={984 - y} fill="#fff" stroke="#ff0000" />;
}

function Arrow({ tail, tip }) {
  const dx = tip[0] - tail[0];
  const dy = tip[1] - tail[1];
  const len = Math.hypot(dx, dy);
  const [ux, uy] = [dx / len, dy / len];
  const at = (along, side) => `${tail[0] + ux * along - uy * side},${tail[1] + uy * along + ux * side}`;
  return (
    <polygon
      fill="#ff3838"
      points={[at(0, -0.5), at(len - 9, -2.5), at(len - 10, -5), at(len, 0), at(len - 10, 5), at(len - 9, 2.5), at(0, 0.5)].join(' ')}
    />
  );
}

function Watermark() {
  return (
    <g fill="#e9e9e9" fontFamily={CJK} textAnchor="middle">
      <g transform="translate(748 449) rotate(-41.5)">
        <text y="30" fontSize="82" fontWeight="700">赢家财富网</text>
      </g>
      <g transform="translate(796 510) rotate(-41.5)">
        <text y="10" fontSize="27" fontWeight="500">赢家江恩软件 股票分析软件 江恩工具软件</text>
      </g>
      <g transform="translate(819 554) rotate(-40)">
        <text y="9" fontSize="33" fontWeight="500">www.yingjia360.com</text>
      </g>
      <text x="927" y="649" fontSize="25" fontWeight="500">QQ:100800360</text>
    </g>
  );
}

function Chart() {
  return (
    <svg viewBox="0 129 1591 857" className="block h-auto w-full bg-white" role="img" aria-label="上证指数 日K线">
      <Watermark />

      <g fontFamily='"Liberation Sans", sans-serif' fontSize="9" fill="#a0a0a0">
        {DATES.map((d, i) => <text key={d} x={i === 0 ? 71 : 60 + i * 70} y="139">{d}</text>)}
      </g>
      <rect x="71" y="142" width="1520" height="1" fill="#a0a0a0" />

      <g fontFamily={CJK} fontSize="13">
        <text x="3" y="147" fontSize="12" fill="#0000ff">日K线</text>
        <text x="71" y="155">极反通道</text>
        <text x="1538" y="155" fill="#0000ff">上证指数</text>
      </g>
      <g fontFamily='Roboto, sans-serif' fontSize="11">
        {LEGEND.map(([s, x, c]) => <text key={s} x={x} y="155" fill={c}>{s}</text>)}
      </g>
      <text x="1489" y="155" fontFamily='"DejaVu Sans", sans-serif' fontSize="11" fill="#0000ff">000001</text>
      <path d="M1134 157H1142L1138 161Z" fill="#000" />

      <g shapeRendering="crispEdges">
        {SCALE.map(([s, y]) => <path key={s} d={`M71 ${y}.5H1590`} stroke="#a0a0a0" strokeDasharray="3 3" />)}
        {VOLUMES.map((v, i) => <Volume key={i} top={v} dir={CANDLES[i][0]} i={i} />)}
        {CANDLES.map((row, i) => <Candle key={i} row={row} i={i} />)}
        {LINES.map(([c, pts], i) => <polyline key={i} points={pts} fill="none" stroke={c} transform="translate(.5 .5)" />)}
        <path d="M102 342.500L122 347.500M361 680.500L381 675.500" stroke="#0000ff" />
        <path d="M1436 513.500H1590" stroke="#808080" strokeDasharray="6 1" />
      </g>

      <g fontFamily='"DejaVu Sans Mono", monospace' fontSize="10" fill="#404040">
        {SCALE.map(([s, , y]) => <text key={s} x="14" y={y}>{s}</text>)}
      </g>
      <g fontFamily='"DejaVu Sans", sans-serif' fontSize="11" fill="#0000ff">
        <text x="122" y="358">3500.2900</text>
        <text x="381" y="678">2863.6499</text>
      </g>

      {ARROWS.map(([a, b, c, d], i) => <Arrow key={i} tail={[a, b]} tip={[c, d]} />)}
      <g fontFamily={CJK} fontSize="19" fill="#ff3838">
        <text x="1308" y="429">蓝色上轨线</text>
        <text x="1416" y="625">生命线</text>
      </g>

      <rect x="0" y="985" width="1591" height="1" fill="#a0a0a0" />
      <rect x="1590" y="129" width="1" height="857" fill="#a0a0a0" />
    </svg>
  );
}

const PANES = [
  ['三', 'M3 1.500H12M4 6.500H11M2 11.500H13'],
  ['二', 'M3 2.500H12M2 10.500H13'],
  ['一', 'M2 6.500H13'],
  ['返回', 'M4 6.500H12M5.500 5V8'],
];

export default function App() {
  return (
    <div className={`flex min-h-screen flex-col bg-[#f0f0f0] ${UI_FONT}`}>
      <TitleBar />
      <MenuBar />
      <ViewBar />
      <PeriodBar />
      <DrawBar />
      <main className="relative">
        <Chart />
        <button aria-label="展开" className={`absolute bottom-px left-0 flex h-[17px] w-[25px] items-center justify-center ${RAISED}`}>
          <svg viewBox="0 0 10 8" className="h-2 w-[10px]"><path d="M5 1L9 7H1Z" fill="none" stroke="#444" /></svg>
        </button>
        <div className="absolute right-0 bottom-px flex flex-col gap-[5px]">
          {PANES.map(([label, d]) => (
            <button key={label} aria-label={label} className={`flex h-[17px] w-6 items-center justify-center ${RAISED}`}>
              <svg viewBox="0 0 15 13" className="h-[13px] w-[15px]" shapeRendering="crispEdges"><path d={d} stroke="#000" fill="none" /></svg>
            </button>
          ))}
        </div>
      </main>
    </div>
  );
}
